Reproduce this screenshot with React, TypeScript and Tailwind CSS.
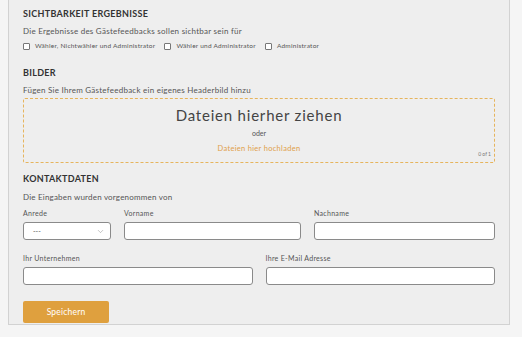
import { ChevronDown } from "lucide-react";

const FONT = { fontFamily: "Lato, 'Open Sans', sans-serif" };

const Heading = ({ children, className }: { children: string; className: string }) => (
  <div className={`h-[14px] leading-[14px] text-[9px] font-bold tracking-[0.3px] text-[#333] ${className}`}>{children}</div>
);

const Check = ({ label }: { label: string }) => (
  <label className="flex items-center gap-[5px] mr-[9px]">
    <span className="w-[7px] h-[7px] border border-[#777] rounded-[1px] bg-white" />
    <span className="text-[6.5px] tracking-[0.25px] text-[#555]">{label}</span>
  </label>
);

const Field = ({ label }: { label: string }) => (
  <div className="flex flex-col">
    <div className="h-[10px] leading-[10px] text-[7px] tracking-[0.3px] text-[#555]">{label}</div>
    <div className="mt-[4px] h-[18px] bg-white border border-[#8a8a8a] rounded-[3px]" />
  </div>
);

const App = (): JSX.Element => {
  return (
    <div className="w-[522px] h-[337px] bg-[#f5f5f5] overflow-hidden" style={FONT}>
      <div className="ml-[8px] w-[502px] h-[325px] bg-[#eeeeee] border-l border-r border-b border-[#d2d2d2] px-[14px] pt-[7px]">
        <Heading className="">SICHTBARKEIT ERGEBNISSE</Heading>
        <div className="mt-[4px] h-[12px] leading-[12px] text-[8px] tracking-[0.25px] text-[#555]">
          Die Ergebnisse des Gästefeedbacks sollen sichtbar sein für
        </div>
        <div className="mt-[4px] h-[10px] flex items-center">
          <Check label="Wähler, Nichtwähler und Administrator" />
          <Check label="Wähler und Administrator" />
          <Check label="Administrator" />
        </div>

        <Heading className="mt-[15px]">BILDER</Heading>
        <div className="mt-[4px] h-[12px] leading-[12px] text-[8px] tracking-[0.25px] text-[#555]">
          Fügen Sie Ihrem Gästefeedback ein eigenes Headerbild hinzu
        </div>
        <div className="relative mt-[2px] h-[65px] border border-dashed border-[#e6b45c] rounded-[2px] flex flex-col items-center">
          <div className="mt-[7px] h-[18px] leading-[18px] text-[15px] tracking-[0.8px] text-[#444]">Dateien hierher ziehen</div>
          <div className="mt-[4px] h-[10px] leading-[10px] text-[7px] text-[#555]">oder</div>
          <div className="mt-[6px] h-[10px] leading-[10px] text-[7.5px] tracking-[0.3px] text-[#e0a04a]">Dateien hier hochladen</div>
          <div className="absolute right-[3px] bottom-[4px] text-[5px] text-[#777]">0 of 1</div>
        </div>

        <Heading className="mt-[9px]">KONTAKTDATEN</Heading>
        <div className="mt-[5px] h-[12px] leading-[12px] text-[8px] tracking-[0.2px] text-[#555]">
          Die Eingaben wurden vorgenommen von
        </div>
        <div className="mt-[5px] grid grid-cols-[88px_177px_1fr] gap-x-[13px]">
          <div className="flex flex-col">
            <div className="h-[10px] leading-[10px] text-[7px] tracking-[0.3px] text-[#555]">Anrede</div>
            <div className="mt-[4px] h-[18px] bg-white border border-[#8a8a8a] rounded-[3px] flex items-center justify-between pl-[9px] pr-[5px]">
              <span className="text-[7px] text-[#555]">---</span>
              <ChevronDown size={9} strokeWidth={1.3} color="#888" />
            </div>
          </div>
          <Field label="Vorname" />
          <Field label="Nachname" />
        </div>
        <div className="mt-[13px] grid grid-cols-2 gap-x-[13px]">
          <Field label="Ihr Unternehmen" />
          <Field label="Ihre E-Mail Adresse" />
        </div>
        <button className="mt-[16px] w-[86px] h-[22px] bg-[#dfa03e] rounded-[2px] text-white text-[8.5px] tracking-[0.2px]">
          Speichern
        </button>
      </div>
    </div>
  );
};

export default App;
